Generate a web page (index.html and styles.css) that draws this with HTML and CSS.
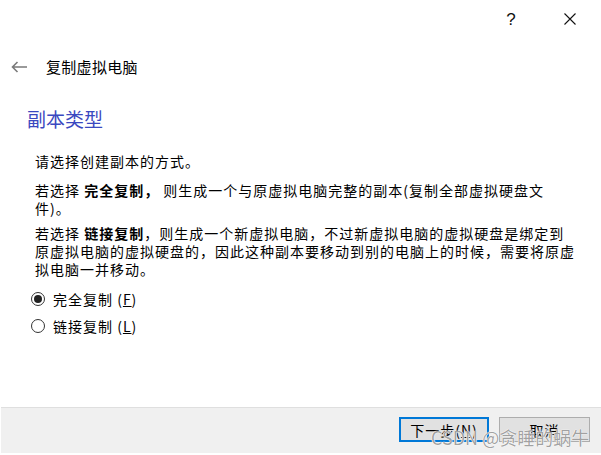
FILE: index.html
```html
<!DOCTYPE html>
<html lang="zh-CN">
<head>
<meta charset="utf-8">
<title>复制虚拟电脑</title>
<link rel="stylesheet" href="styles.css">
</head>
<body>
<div class="window">
  <div class="titlebar">
    <span class="help">?</span>
    <svg class="close" width="12" height="12" viewBox="0 0 12 12"><path d="M0.5 0.5 L11.5 11.5 M11.5 0.5 L0.5 11.5" stroke="#111" stroke-width="1.1" fill="none"/></svg>
  </div>
  <div class="header">
    <svg class="back" width="16" height="12" viewBox="0 0 16 12"><path d="M16 6 H1.5 M6.5 1 L1.5 6 L6.5 11" stroke="#7a7a7a" stroke-width="1.6" fill="none"/></svg>
    <span class="header-title">复制虚拟电脑</span>
  </div>
  <div class="page">
    <h1 class="page-title">副本类型</h1>
    <div class="content">
      <p class="para p1">请选择创建副本的方式。</p>
      <p class="para p2">若选择 <b>完全复制，</b> 则生成一个与原虚拟电脑完整的副本(复制全部虚拟硬盘文<br>件)。</p>
      <p class="para p3">若选择 <b>链接复制</b>，则生成一个新虚拟电脑，不过新虚拟电脑的虚拟硬盘是绑定到<br>原虚拟电脑的虚拟硬盘的，因此这种副本要移动到别的电脑上的时候，需要将原虚<br>拟电脑一并移动。</p>
      <div class="radios">
        <label class="radio"><span class="dot checked"></span><span class="radio-text">完全复制 (<u>F</u>)</span></label>
        <label class="radio"><span class="dot"></span><span class="radio-text">链接复制 (<u>L</u>)</span></label>
      </div>
    </div>
  </div>
  <div class="footer">
    <button class="btn btn-default">下一步(<u>N</u>)</button>
    <button class="btn">取消</button>
    <span class="watermark">CSDN @贪睡的蜗牛</span>
  </div>
</div>
</body>
</html>
```
FILE: styles.css
```css
* { box-sizing: border-box; }
html, body { margin: 0; padding: 0; background: #fff; }
body {
  font-family: "Noto Sans CJK SC", "Noto Sans", sans-serif;
  color: #000;
}
.window {
  width: 601px;
  height: 455px;
  display: flex;
  flex-direction: column;
  background: #fff;
}
.titlebar {
  height: 40px;
  display: flex;
  justify-content: flex-end;
  align-items: flex-start;
  padding: 11px 25px 0 0;
  gap: 43px;
}
.help {
  width: 20px;
  text-align: center;
  font-family: "Liberation Sans", sans-serif;
  font-size: 17px;
  line-height: 17px;
  color: #111;
}
.close { margin-top: 2px; }
.header {
  display: flex;
  align-items: center;
  padding: 16px 0 0 11px;
  gap: 19px;
  height: 37px;
}
.header-title {
  font-size: 15px;
  line-height: 20px;
  letter-spacing: 0.3px;
}
.page { flex: 1; }
.page-title {
  margin: 30px 0 0 27px;
  font-size: 19px;
  line-height: 24px;
  font-weight: normal;
  color: #3a48c0;
}
.content {
  padding-left: 35px;
  font-size: 14px;
  letter-spacing: 1px;
  line-height: 18px;
}
.para { margin: 0; }
.p1 { margin-top: 21px; }
.p2 { margin-top: 11px; }
.p3 { margin-top: 7px; }
.radios {
  margin-top: 12px;
  margin-left: -4px;
  display: flex;
  flex-direction: column;
  gap: 9px;
}
.radio {
  display: flex;
  align-items: center;
  gap: 8px;
  height: 18px;
}
.dot {
  width: 14px;
  height: 14px;
  border: 1px solid #333;
  border-radius: 50%;
  position: relative;
  background: #fff;
}
.dot.checked::after {
  content: "";
  position: absolute;
  left: 2px; top: 2px;
  width: 8px; height: 8px;
  border-radius: 50%;
  background: #222;
}
.footer {
  position: relative;
  height: 46px;
  margin: 0 0 2px 1px;
  background: #f0f0f0;
  border-top: 1px solid #dfdfdf;
  display: flex;
  justify-content: flex-end;
  align-items: flex-start;
  padding: 9px 11px 0 0;
  gap: 10px;
}
.btn {
  width: 91px;
  height: 25px;
  background: #e1e1e1;
  border: 1px solid #adadad;
  font-family: "Noto Sans CJK SC", sans-serif;
  font-size: 14px;
  letter-spacing: 1px;
  line-height: 18px;
  color: #000;
  padding: 0;
}
.btn-default {
  width: 90px;
  border: 2px solid #0078d7;
}
.watermark {
  position: absolute;
  left: 430px;
  top: 18px;
  font-family: "Noto Sans CJK SC", sans-serif;
  font-size: 18px;
  line-height: 22px;
  color: rgba(125, 125, 125, 0.72);
  text-shadow: 0 0 1px #fff, 0 0 1px #fff, 0 0 1px #fff;
  white-space: nowrap;
  pointer-events: none;
}
```
